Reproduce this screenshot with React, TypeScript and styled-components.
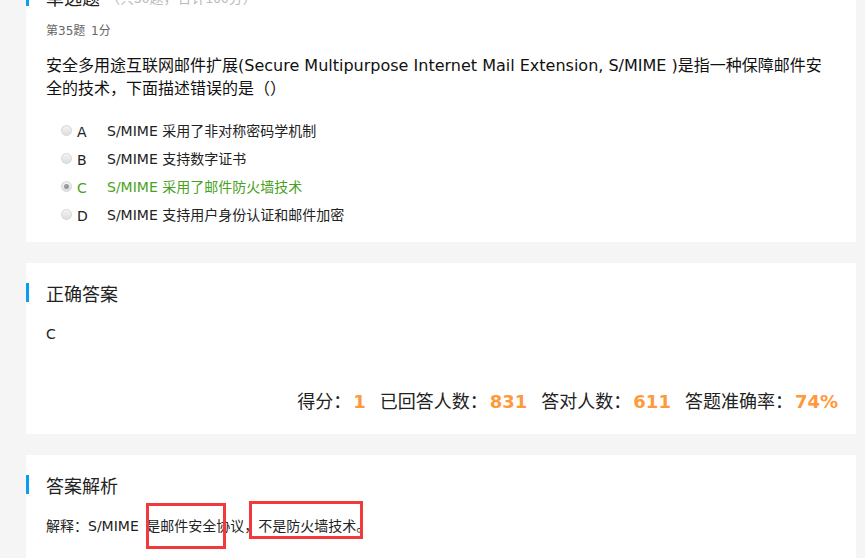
import React from "react";
import styled, { createGlobalStyle } from "styled-components";

const GlobalStyle = createGlobalStyle`
  html, body {
    margin: 0;
    padding: 0;
    background: #f5f5f5;
    overflow: hidden;
  }
  body {
    font-family: "DejaVu Sans", "Noto Sans CJK SC", sans-serif;
    color: #222;
  }
`;

const Page = styled.div`
  width: 865px;
  height: 558px;
  overflow: hidden;
  padding: 0 9px 0 26px;
  box-sizing: border-box;
`;

const Column = styled.div`
  margin-top: -33px;
  display: flex;
  flex-direction: column;
  gap: 21px;
`;

const Card = styled.section<{ $pb?: number }>`
  background: #fff;
  padding: 20px 18px ${(p) => p.$pb ?? 20}px 0;
  position: relative;
`;

const Heading = styled.h2`
  margin: 0;
  height: 19px;
  border-left: 3px solid #0a9cf5;
  padding-left: 17px;
  display: flex;
  align-items: center;
  font-family: "Noto Sans CJK SC", sans-serif;
  font-size: 18px;
  font-weight: normal;
  color: #222;
  white-space: nowrap;
`;

const Muted = styled.span`
  color: #bbb;
  font-size: 14px;
  margin-left: 6px;
`;

const Body = styled.div`
  padding-left: 20px;
`;

const Meta = styled.div`
  margin-top: 16px;
  font-size: 12px;
  line-height: 18px;
  color: #666;
  word-spacing: 2px;
`;

const Question = styled.p`
  margin: 14px 0 0;
  padding-right: 12px;
  font-size: 16px;
  line-height: 23px;
  color: #111;
`;

const Options = styled.ul`
  list-style: none;
  margin: 20px 0 0;
  padding: 0 0 0 15px;
  display: flex;
  flex-direction: column;
  gap: 8px;
`;

const Option = styled.li<{ $active?: boolean }>`
  display: flex;
  align-items: center;
  height: 20px;
  font-size: 14px;
  color: ${(p) => (p.$active ? "#4aa11e" : "#222")};
`;

const Radio = styled.span<{ $checked?: boolean }>`
  width: 11px;
  height: 11px;
  border-radius: 50%;
  border: 1px solid #d6d6d6;
  background: linear-gradient(#f4f4f4, #dedede);
  box-sizing: border-box;
  display: flex;
  align-items: center;
  justify-content: center;
  margin-right: 5px;
  &::after {
    content: "";
    width: 5px;
    height: 5px;
    border-radius: 50%;
    background: ${(p) => (p.$checked ? "#9a9a9a" : "transparent")};
  }
`;

const Letter = styled.span`
  width: 30px;
  font-size: 14px;
  position: relative;
  top: 2px;
`;

const AnswerText = styled.div`
  margin-top: 22px;
  font-size: 14px;
  line-height: 20px;
`;

const Stats = styled.div`
  margin-top: 44px;
  display: flex;
  justify-content: flex-end;
  align-items: baseline;
  gap: 14px;
  font-size: 18px;
  line-height: 24px;
`;

const Stat = styled.span`
  white-space: nowrap;
  font-family: "Noto Sans CJK SC", sans-serif;
`;

const Num = styled.b`
  color: #ff9a3c;
  font-family: "DejaVu Sans", sans-serif;
  font-weight: bold;
  font-size: 18px;
  margin-left: 2px;
`;

const Explain = styled.div`
  margin-top: 21px;
  font-size: 14px;
  line-height: 22px;
  position: relative;
  word-spacing: 3px;
`;

const Mark = styled.span<{ $l: number; $t: number; $w: number; $h: number }>`
  position: absolute;
  left: ${(p) => p.$l}px;
  top: ${(p) => p.$t}px;
  width: ${(p) => p.$w}px;
  height: ${(p) => p.$h}px;
  border: 3px solid #f2393b;
  box-sizing: border-box;
`;

const options = [
  { key: "A", text: "S/MIME 采用了非对称密码学机制" },
  { key: "B", text: "S/MIME 支持数字证书" },
  { key: "C", text: "S/MIME 采用了邮件防火墙技术", active: true },
  { key: "D", text: "S/MIME 支持用户身份认证和邮件加密" },
];

export default function App() {
  return (
    <Page>
      <GlobalStyle />
      <Column>
        <Card $pb={18}>
          <Heading>
            单选题<Muted>（共50题，合计100分）</Muted>
          </Heading>
          <Body>
            <Meta>第35题 1分</Meta>
            <Question>
              安全多用途互联网邮件扩展(Secure Multipurpose Internet Mail Extension, S/MIME )是指一种保障邮件安全的技术，下面描述错误的是（）
            </Question>
            <Options>
              {options.map((o) => (
                <Option key={o.key} $active={o.active}>
                  <Radio $checked={o.active} />
                  <Letter>{o.key}</Letter>
                  {o.text}
                </Option>
              ))}
            </Options>
          </Body>
        </Card>

        <Card $pb={20}>
          <Heading>正确答案</Heading>
          <Body>
            <AnswerText>C</AnswerText>
            <Stats>
              <Stat>
                得分：<Num>1</Num>
              </Stat>
              <Stat>
                已回答人数：<Num>831</Num>
              </Stat>
              <Stat>
                答对人数：<Num>611</Num>
              </Stat>
              <Stat>
                答题准确率：<Num>74%</Num>
              </Stat>
            </Stats>
          </Body>
        </Card>

        <Card $pb={60}>
          <Heading>答案解析</Heading>
          <Body>
            <Explain>
              解释：S/MIME 是邮件安全协议，不是防火墙技术。
              <Mark $l={100} $t={-12} $w={80} $h={46} />
              <Mark $l={203} $t={-14} $w={114} $h={38} />
            </Explain>
          </Body>
        </Card>
      </Column>
    </Page>
  );
}
